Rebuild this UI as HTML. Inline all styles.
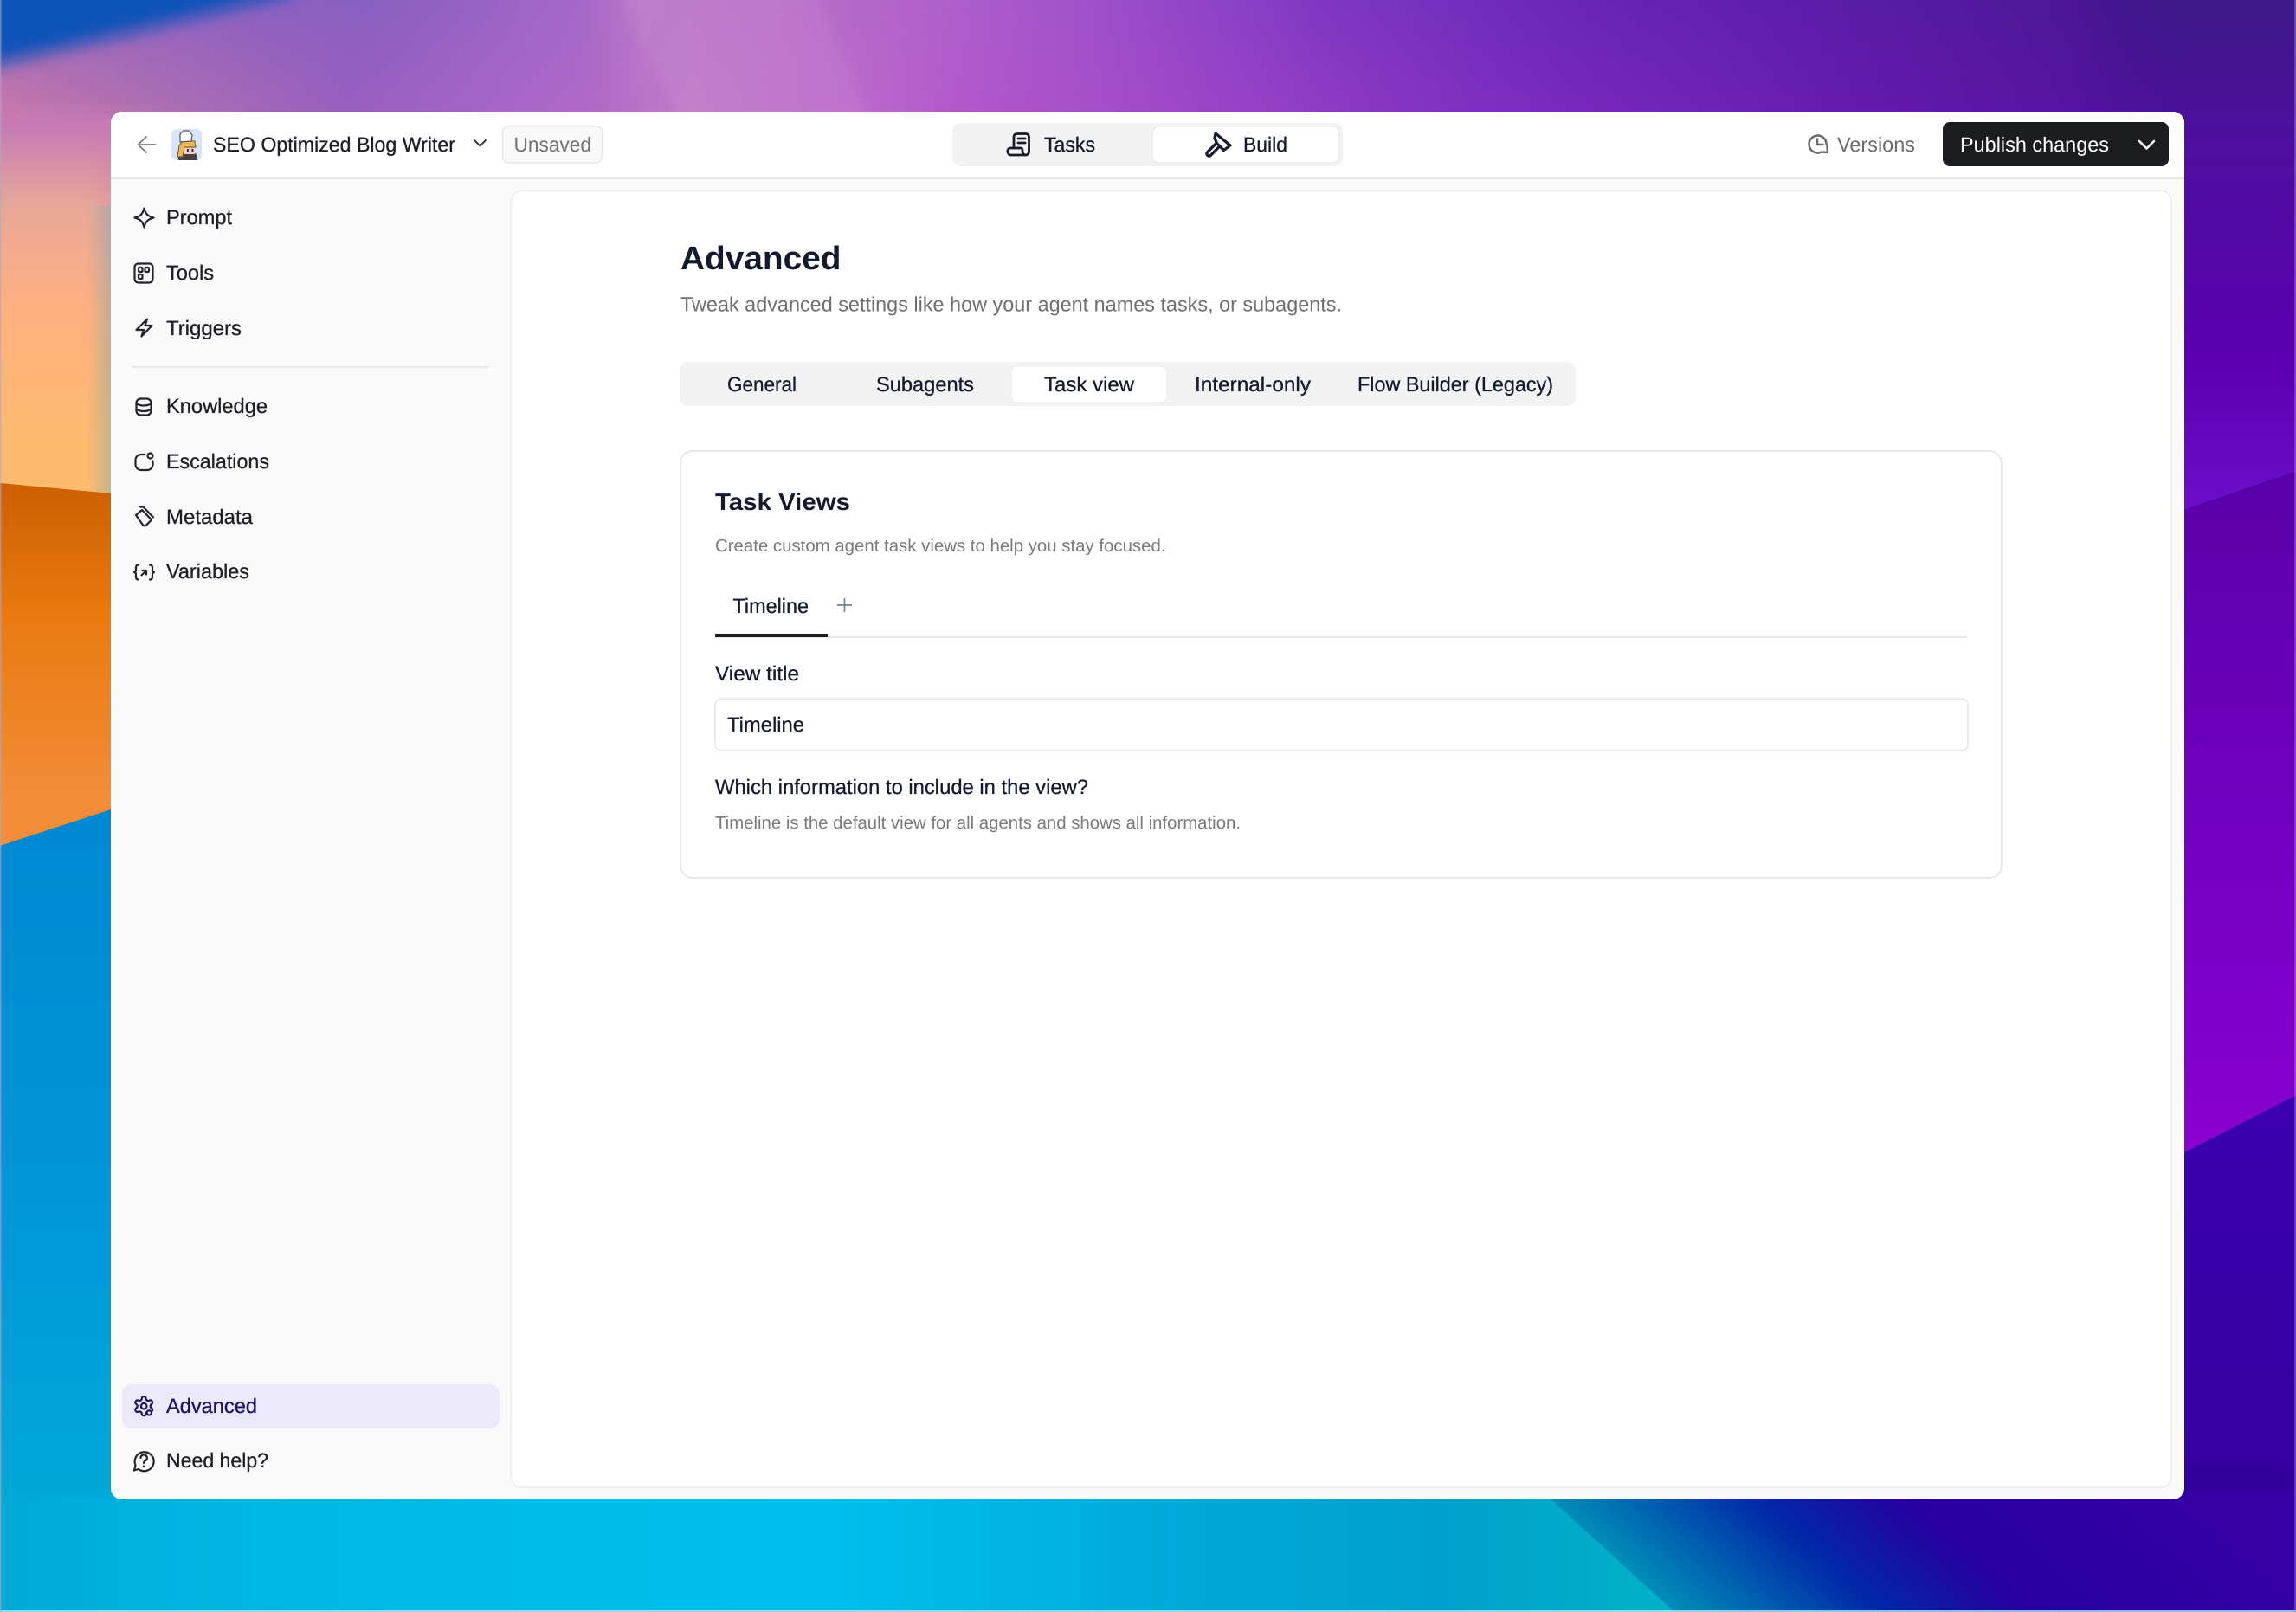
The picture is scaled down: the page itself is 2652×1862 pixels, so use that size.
<!DOCTYPE html>
<html lang="en">
<head>
<meta charset="utf-8">
<title>Advanced</title>
<style>
html,body{margin:0;padding:0;background:#fff;width:2652px;height:1862px;overflow:hidden}
svg{display:block}
text{font-family:"Liberation Sans",sans-serif;font-size:23.7px;fill:#1d1f26;text-rendering:geometricPrecision}
.m{stroke:#1d1f26;stroke-width:.3px}
.n{fill:#141a2e}
.nm{fill:#141a2e;stroke:#141a2e;stroke-width:.3px}
.g{fill:#737373}
.s{font-size:20.3px;fill:#7a7a7a}
.ic{fill:none;stroke:#22242a;stroke-width:2.2;stroke-linecap:round;stroke-linejoin:round}
.dk{fill:none;stroke:#171b2e;stroke-width:2.8;stroke-linecap:round;stroke-linejoin:round}
</style>
</head>
<body>
<svg xmlns="http://www.w3.org/2000/svg" width="2652" height="1862" viewBox="0 0 2652 1862">
<defs>
<linearGradient id="topA" gradientUnits="userSpaceOnUse" x1="0" y1="0" x2="2652" y2="0">
<stop offset="0" stop-color="#9a64c0"/><stop offset=".16" stop-color="#8860c0"/><stop offset=".255" stop-color="#a668c8"/><stop offset=".28" stop-color="#bb78c8"/><stop offset=".34" stop-color="#bb70c8"/><stop offset=".446" stop-color="#a858cc"/><stop offset=".574" stop-color="#8038c4"/><stop offset=".70" stop-color="#6824b4"/><stop offset=".83" stop-color="#561ca4"/><stop offset=".98" stop-color="#3e1288"/><stop offset="1" stop-color="#3d1288"/>
</linearGradient>
<linearGradient id="topB" gradientUnits="userSpaceOnUse" x1="0" y1="0" x2="2652" y2="0">
<stop offset="0" stop-color="#c87aa8"/><stop offset=".064" stop-color="#b070b0"/><stop offset=".15" stop-color="#9a60c0"/><stop offset=".255" stop-color="#b068c8"/><stop offset=".30" stop-color="#c07ac8"/><stop offset=".377" stop-color="#bc68cc"/><stop offset=".415" stop-color="#b458cc"/><stop offset=".51" stop-color="#a048c8"/><stop offset=".64" stop-color="#8030c0"/><stop offset=".83" stop-color="#6418a8"/><stop offset=".98" stop-color="#48109a"/><stop offset="1" stop-color="#48109a"/>
</linearGradient>
<linearGradient id="vf" gradientUnits="userSpaceOnUse" x1="0" y1="0" x2="0" y2="135">
<stop offset="0" stop-color="#000"/><stop offset="1" stop-color="#fff"/>
</linearGradient>
<mask id="vmask" maskUnits="userSpaceOnUse" x="0" y="0" width="2652" height="140"><rect x="0" y="0" width="2652" height="140" fill="url(#vf)"/></mask>
<linearGradient id="lf" gradientUnits="userSpaceOnUse" x1="100" y1="0" x2="230" y2="0">
<stop offset="0" stop-color="#fff"/><stop offset="1" stop-color="#000"/>
</linearGradient>
<mask id="lmask" maskUnits="userSpaceOnUse" x="0" y="0" width="300" height="620"><rect x="0" y="0" width="300" height="620" fill="url(#lf)"/></mask>
<linearGradient id="rf" gradientUnits="userSpaceOnUse" x1="2400" y1="0" x2="2523" y2="0">
<stop offset="0" stop-color="#000"/><stop offset="1" stop-color="#fff"/>
</linearGradient>
<mask id="rmask" maskUnits="userSpaceOnUse" x="2400" y="0" width="252" height="640"><rect x="2400" y="0" width="252" height="640" fill="url(#rf)"/></mask>
<linearGradient id="peach" gradientUnits="userSpaceOnUse" x1="0" y1="115" x2="0" y2="570">
<stop offset="0" stop-color="#c67ab5" stop-opacity="0"/><stop offset=".07" stop-color="#c67ab5"/><stop offset=".27" stop-color="#e8a898"/><stop offset=".53" stop-color="#ffb080"/><stop offset=".87" stop-color="#fdbb70"/><stop offset="1" stop-color="#fdbb70"/>
</linearGradient>
<linearGradient id="orange" gradientUnits="userSpaceOnUse" x1="0" y1="558" x2="0" y2="977">
<stop offset="0" stop-color="#cc6000"/><stop offset=".37" stop-color="#e87a10"/><stop offset=".88" stop-color="#f28d3a"/><stop offset="1" stop-color="#f28d3a"/>
</linearGradient>
<linearGradient id="blue" gradientUnits="userSpaceOnUse" x1="0" y1="933" x2="0" y2="1732">
<stop offset="0" stop-color="#0088d0"/><stop offset=".62" stop-color="#0098d8"/><stop offset="1" stop-color="#00a9d8"/>
</linearGradient>
<linearGradient id="r1" gradientUnits="userSpaceOnUse" x1="0" y1="0" x2="0" y2="590">
<stop offset="0" stop-color="#3d1a88"/><stop offset=".3" stop-color="#4f0fa0"/><stop offset=".7" stop-color="#5a00b0"/><stop offset=".98" stop-color="#6c0cc8"/><stop offset="1" stop-color="#6c0cc8"/>
</linearGradient>
<linearGradient id="r2" gradientUnits="userSpaceOnUse" x1="0" y1="545" x2="0" y2="1335">
<stop offset="0" stop-color="#5a00a8"/><stop offset=".5" stop-color="#7000c0"/><stop offset="1" stop-color="#8a00d0"/>
</linearGradient>
<linearGradient id="r3" gradientUnits="userSpaceOnUse" x1="0" y1="1265" x2="0" y2="1862">
<stop offset="0" stop-color="#3c00b0"/><stop offset="1" stop-color="#300098"/>
</linearGradient>
<linearGradient id="bot" gradientUnits="userSpaceOnUse" x1="0" y1="0" x2="2000" y2="0">
<stop offset="0" stop-color="#00aad8"/><stop offset=".17" stop-color="#00b8e4"/><stop offset=".473" stop-color="#00c0ee"/><stop offset=".676" stop-color="#00aada"/><stop offset=".83" stop-color="#00a0cc"/><stop offset=".95" stop-color="#00b0c8"/><stop offset="1" stop-color="#00b0c8"/>
</linearGradient>
<linearGradient id="dark" gradientUnits="userSpaceOnUse" x1="1784" y1="0" x2="2652" y2="0" gradientTransform="translate(-1923 0) skewX(48)">
<stop offset="0" stop-color="#0090b8"/><stop offset=".13" stop-color="#0060b0"/><stop offset=".28" stop-color="#0028a8"/><stop offset=".48" stop-color="#2800a0"/><stop offset=".87" stop-color="#3500a4"/><stop offset="1" stop-color="#3500a4"/>
</linearGradient>
<filter id="b10" x="-30%" y="-60%" width="160%" height="220%"><feGaussianBlur stdDeviation="10"/></filter>
<filter id="b6" x="-30%" y="-30%" width="160%" height="160%"><feGaussianBlur stdDeviation="6"/></filter>
<clipPath id="tc"><rect x="0" y="0" width="2652" height="135"/></clipPath>
<clipPath id="tl"><rect x="0" y="0" width="500" height="135"/></clipPath>
</defs>

<!-- background -->
<rect x="0" y="0" width="2652" height="1862" fill="#0098d8"/>
<rect x="0" y="0" width="2652" height="140" fill="url(#topA)"/>
<rect x="0" y="0" width="2652" height="140" fill="url(#topB)" mask="url(#vmask)"/>
<g clip-path="url(#tc)"><polygon points="710,-10 790,145 1010,145 940,-10" fill="#fff" opacity=".05" filter="url(#b6)"/></g>
<rect x="0" y="138" width="135" height="100" fill="#c87aa8"/>
<rect x="0" y="115" width="300" height="455" fill="url(#peach)" mask="url(#lmask)"/>
<polygon points="0,558 140,571 140,931 0,977" fill="url(#orange)"/>
<polygon points="0,977 140,931 140,1732 0,1732" fill="url(#blue)"/>
<g clip-path="url(#tl)"><polygon points="-40,-40 340,-40 340,-8 -40,83" fill="#0a52b8" filter="url(#b10)"/></g>
<polygon points="2400,0 2652,0 2652,544 2400,630" fill="url(#r1)" mask="url(#rmask)"/>
<polygon points="2500,596 2652,544 2652,1265 2500,1343" fill="url(#r2)"/>
<polygon points="2500,1343 2652,1265 2652,1862 2500,1862" fill="url(#r3)"/>
<rect x="0" y="1732" width="2652" height="130" fill="url(#bot)"/>
<polygon points="1784,1725 1934,1862 2652,1862 2652,1725" fill="url(#dark)"/>
<rect x="0" y="1860" width="2652" height="2" fill="#aee6f6" opacity=".8"/>
<rect x="0" y="0" width="1.5" height="1862" fill="#b0a8c0" opacity=".6"/>
<rect x="2650" y="0" width="2" height="1862" fill="#a090c0" opacity=".4"/>

<!-- app card -->
<rect x="128" y="129" width="2395" height="1603" rx="13" fill="#fafafa"/>
<path d="M128 206V142a13 13 0 0 1 13-13H2510a13 13 0 0 1 13 13V206Z" fill="#fff"/>
<rect x="128" y="205" width="2395" height="2.4" fill="#e9e9e9"/>

<!-- header left -->
<path d="M179.5 167H160M169 158l-9.5 9 9.5 9" fill="none" stroke="#7b7b7b" stroke-width="1.8" stroke-linecap="round" stroke-linejoin="round"/>
<g>
<rect x="198" y="149" width="35" height="36" rx="6" fill="#d8e4fa"/>
<path d="M206 185v-5l2-3h18l2 4v4z" fill="#4a4048"/>
<rect x="213" y="168" width="12" height="10" fill="#f6d0c4"/>
<path d="M205 181L207 168L212 162L225 163L226 170H213L211 181Z" fill="#f2b850" stroke="#5a4a30" stroke-width=".9"/>
<path d="M208 164V155L212 151H218L222 156L221 163Z" fill="#fff" stroke="#55525a" stroke-width="1.2"/>
<rect x="216" y="172" width="1.8" height="3" fill="#222"/><rect x="221.5" y="172" width="1.8" height="3" fill="#222"/>
</g>
<text class="m" x="246" y="175" textLength="280" lengthAdjust="spacingAndGlyphs">SEO Optimized Blog Writer</text>
<path d="M548 162l6.5 6.5 6.5-6.5" fill="none" stroke="#3a3a3f" stroke-width="2" stroke-linecap="round" stroke-linejoin="round"/>
<rect x="580.5" y="145.5" width="115" height="42.5" rx="7" fill="#f9f9f9" stroke="#e8e8e8" stroke-width="1.5"/>
<text class="g" x="593.5" y="175" textLength="89.5" lengthAdjust="spacingAndGlyphs">Unsaved</text>

<!-- header center -->
<rect x="1100" y="142" width="451" height="50" rx="10" fill="#f3f3f4"/>
<rect x="1331" y="146" width="216" height="42" rx="8" fill="#fff"/>
<rect x="1331" y="146" width="216" height="42" rx="8" fill="none" stroke="#e6e6e6" stroke-width="1"/>
<path class="dk" d="M1171 170V158a3.5 3.5 0 0 1 3.5-3.5H1185a3.5 3.5 0 0 1 3.5 3.5V175a4 4 0 0 1-4 4H1168a4 4 0 0 1-4-4v-1a3 3 0 0 1 3-3h12a2 2 0 0 1 2 2v2a4 4 0 0 0 4 4M1176 160h8M1176 165h8"/>
<text class="nm" x="1206" y="175" textLength="59" lengthAdjust="spacingAndGlyphs">Tasks</text>
<path d="M1396.5 177.5l12-12" stroke="#171b2e" stroke-width="8.5" stroke-linecap="round" fill="none"/>
<path d="M1396.5 177.5l12-12" stroke="#fff" stroke-width="2" stroke-linecap="round" fill="none"/>
<path d="M1404 154l17 14-7.5 5.5-8-8-2.5-6z" fill="#fff" stroke="#171b2e" stroke-width="3.2" stroke-linejoin="round"/>
<text class="nm" x="1436" y="175" textLength="51" lengthAdjust="spacingAndGlyphs">Build</text>

<!-- header right -->
<path d="M2109.5 166.5a10 10 0 1 0-7 9.6M2099 160.5v6.5h6.5M2110.5 168.5l.5 7.5-7.5-.5" fill="none" stroke="#6a6a6a" stroke-width="2.5" stroke-linecap="round" stroke-linejoin="round"/>
<text x="2122" y="175" textLength="90" lengthAdjust="spacingAndGlyphs" style="fill:#6c6c6c">Versions</text>
<rect x="2244" y="141" width="261" height="51" rx="8" fill="#1b1c20"/>
<text x="2264" y="175" textLength="172" lengthAdjust="spacingAndGlyphs" style="fill:#fff">Publish changes</text>
<path d="M2471 163l8.5 8.5 8.5-8.5" fill="none" stroke="#fff" stroke-width="2.6" stroke-linecap="round" stroke-linejoin="round"/>

<!-- sidebar -->
<path class="ic" d="M166.5 240.5C168 247 171 250 177.5 251.5C171 253 168 256 166.5 262.5C165 256 162 253 155.5 251.5C162 250 165 247 166.5 240.5Z"/>
<text class="m" x="192" y="259" textLength="76" lengthAdjust="spacingAndGlyphs">Prompt</text>
<rect class="ic" x="155.5" y="304.5" width="21" height="22" rx="4" stroke-width="2.4"/>
<rect class="ic" x="160" y="309" width="4.5" height="5" rx="1" stroke-width="1.7"/>
<rect class="ic" x="167.5" y="309" width="4.5" height="5" rx="1" stroke-width="1.7"/>
<rect class="ic" x="160" y="317" width="4.5" height="5" rx="1" stroke-width="1.7"/>
<text class="m" x="192" y="323" textLength="55" lengthAdjust="spacingAndGlyphs">Tools</text>
<path class="ic" d="M170 368.5L157.5 381H166L163.5 388.5L175.5 376H167.5Z"/>
<text class="m" x="192" y="387" textLength="87" lengthAdjust="spacingAndGlyphs">Triggers</text>
<rect x="152" y="423" width="413" height="1.6" fill="#e4e4e4"/>
<rect class="ic" x="157.5" y="460.5" width="17" height="19" rx="5" stroke-width="2.4"/>
<path class="ic" d="M157.5 466.5Q166 470.5 174.5 466.5M157.5 473Q166 477 174.5 473"/>
<text class="m" x="192" y="477" textLength="117" lengthAdjust="spacingAndGlyphs">Knowledge</text>
<path class="ic" d="M167.5 525H163a6.5 6.5 0 0 0-6.5 6.5v5a6.5 6.5 0 0 0 6.5 6.5h7a6.5 6.5 0 0 0 6.5-6.5v-4"/>
<circle class="ic" cx="173.5" cy="526.5" r="3"/>
<text class="m" x="192" y="541" textLength="119" lengthAdjust="spacingAndGlyphs">Escalations</text>
<path class="ic" d="M157 595l7-6 11 11.5-6.5 6.5q-1.5 1-3 0z" stroke-width="2"/>
<path class="ic" d="M162 585.5h3.5l11.5 12" stroke-width="2"/>
<text class="m" x="192" y="605" textLength="100" lengthAdjust="spacingAndGlyphs">Metadata</text>
<path class="ic" d="M160 652.5q-3 0-3 3v3q0 2-2 2.5q2 .5 2 2.5v3q0 3 3 3M173 652.5q3 0 3 3v3q0 2 2 2.5q-2 .5-2 2.5v3q0 3-3 3M163.5 664.5l5.5-5.5M164.5 659h4.5v4.5" stroke-width="2"/>
<text class="m" x="192" y="668" textLength="96" lengthAdjust="spacingAndGlyphs">Variables</text>

<rect x="141" y="1599" width="436" height="51" rx="11" fill="#ece9fa"/>
<g transform="translate(153 1611) scale(1.1)" fill="none" stroke="#1c1268" stroke-width="2" stroke-linecap="round" stroke-linejoin="round">
<path d="M12.22 2h-.44a2 2 0 0 0-2 2v.18a2 2 0 0 1-1 1.73l-.43.25a2 2 0 0 1-2 0l-.15-.08a2 2 0 0 0-2.73.73l-.22.38a2 2 0 0 0 .73 2.73l.15.1a2 2 0 0 1 1 1.72v.51a2 2 0 0 1-1 1.74l-.15.09a2 2 0 0 0-.73 2.73l.22.38a2 2 0 0 0 2.73.73l.15-.08a2 2 0 0 1 2 0l.43.25a2 2 0 0 1 1 1.73V20a2 2 0 0 0 2 2h.44a2 2 0 0 0 2-2v-.18a2 2 0 0 1 1-1.73l.43-.25a2 2 0 0 1 2 0l.15.08a2 2 0 0 0 2.73-.73l.22-.39a2 2 0 0 0-.73-2.73l-.15-.08a2 2 0 0 1-1-1.74v-.5a2 2 0 0 1 1-1.74l.15-.09a2 2 0 0 0 .73-2.73l-.22-.38a2 2 0 0 0-2.73-.73l-.15.08a2 2 0 0 1-2 0l-.43-.25a2 2 0 0 1-1-1.73V4a2 2 0 0 0-2-2z"/>
<circle cx="12" cy="12" r="3"/>
<circle cx="17.5" cy="19" r="2.4" fill="#ece9fa"/>
</g>
<text x="192" y="1632" textLength="105" lengthAdjust="spacingAndGlyphs" style="fill:#1c1268;stroke:#1c1268;stroke-width:.3px">Advanced</text>
<path class="ic" d="M156.5 1692.5a11 11 0 1 1 3.5 4.5l-5 1.5z"/>
<path class="ic" d="M162.5 1684a3.7 3.7 0 1 1 5.7 3.2q-2.2 1.2-2.2 2.8" stroke-width="2"/>
<circle cx="166" cy="1693.7" r="1.3" fill="#22242a"/>
<text class="m" x="192" y="1695" textLength="118" lengthAdjust="spacingAndGlyphs">Need help?</text>

<!-- main panel -->
<rect x="590.5" y="220.5" width="1917.5" height="1497.5" rx="12" fill="#fff" stroke="#ececec" stroke-width="1.5"/>
<text x="786" y="311" textLength="185.5" lengthAdjust="spacingAndGlyphs" style="font-size:38px;font-weight:bold;fill:#141a2e">Advanced</text>
<text x="786" y="359.5" textLength="764" lengthAdjust="spacingAndGlyphs" style="fill:#6f6f6f">Tweak advanced settings like how your agent names tasks, or subagents.</text>

<rect x="785" y="418" width="1035" height="51" rx="10" fill="#f3f3f4"/>
<rect x="1168" y="423" width="180" height="42" rx="7" fill="#fff" stroke="#e9e9e9" stroke-width="1"/>
<text class="nm" x="840" y="452" textLength="80" lengthAdjust="spacingAndGlyphs">General</text>
<text class="nm" x="1012" y="452" textLength="113" lengthAdjust="spacingAndGlyphs">Subagents</text>
<text class="nm" x="1206" y="452" textLength="104" lengthAdjust="spacingAndGlyphs">Task view</text>
<text class="nm" x="1380" y="452" textLength="134" lengthAdjust="spacingAndGlyphs">Internal-only</text>
<text class="nm" x="1568" y="452" textLength="226" lengthAdjust="spacingAndGlyphs">Flow Builder (Legacy)</text>

<rect x="786" y="521" width="1526" height="493" rx="14" fill="#fff" stroke="#e8e8ea" stroke-width="2"/>
<text x="826" y="589" textLength="156" lengthAdjust="spacingAndGlyphs" style="font-size:27.5px;font-weight:bold;fill:#141a2e">Task Views</text>
<text class="s" x="826" y="637" textLength="520.5" lengthAdjust="spacingAndGlyphs">Create custom agent task views to help you stay focused.</text>
<text class="nm" x="846.5" y="708" textLength="87.5" lengthAdjust="spacingAndGlyphs">Timeline</text>
<path d="M975.5 691v16M967 699h17" stroke="#6f7f9c" stroke-width="1.7" fill="none"/>
<rect x="826" y="735" width="1447" height="2" fill="#e5e7eb"/>
<rect x="826" y="732" width="130" height="4" fill="#1b1c20"/>
<text class="nm" x="826" y="786" textLength="97" lengthAdjust="spacingAndGlyphs">View title</text>
<rect x="826" y="807" width="1447" height="60" rx="7" fill="#fff" stroke="#e5e8ee" stroke-width="1.6"/>
<text class="nm" x="840" y="845" textLength="89" lengthAdjust="spacingAndGlyphs">Timeline</text>
<text class="nm" x="826" y="917" textLength="431" lengthAdjust="spacingAndGlyphs">Which information to include in the view?</text>
<text class="s" x="826" y="957" textLength="607" lengthAdjust="spacingAndGlyphs">Timeline is the default view for all agents and shows all information.</text>
</svg>
</body>
</html>
